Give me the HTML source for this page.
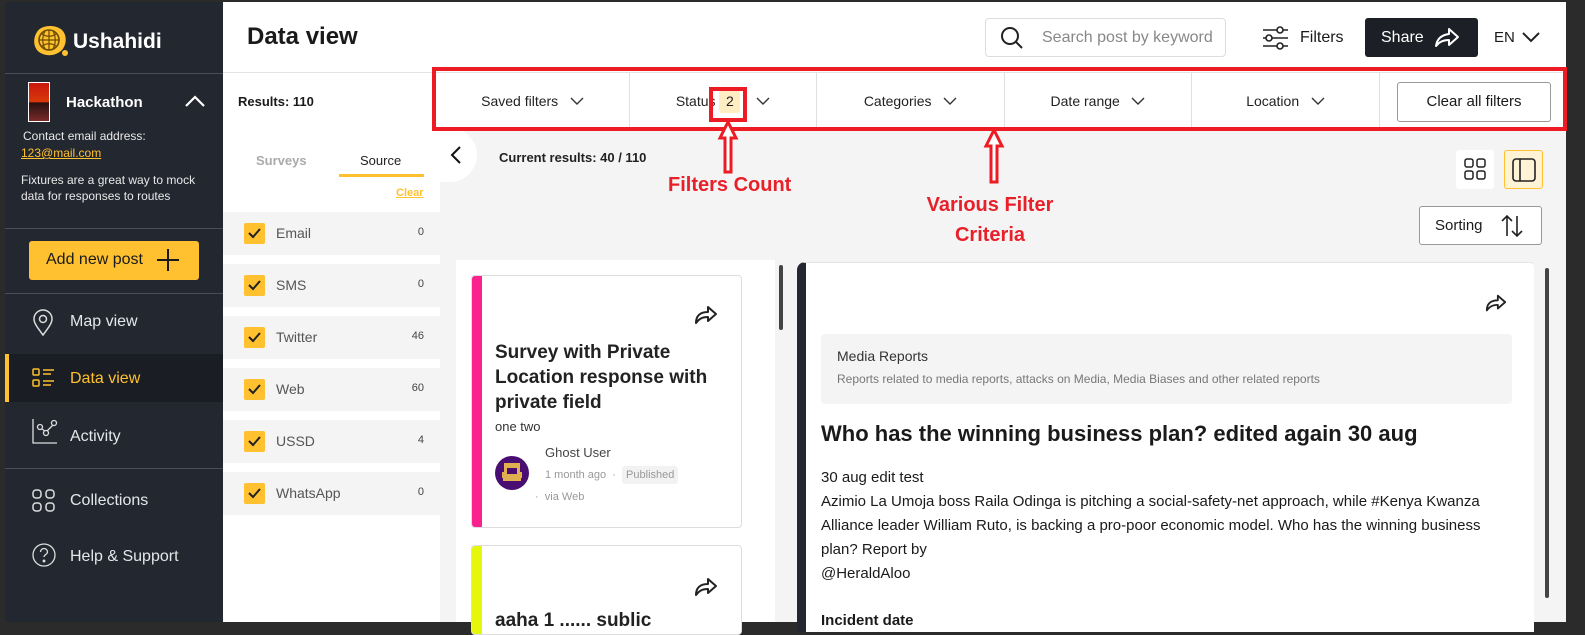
<!DOCTYPE html>
<html><head><meta charset="utf-8">
<style>
*{box-sizing:border-box;margin:0;padding:0}
body{width:1585px;height:622px;overflow:hidden;background:#2b2b2b;font-family:"Liberation Sans",sans-serif;position:relative;color:#1a1a1a}
.a{position:absolute}
.frame{left:5px;top:2px;width:1561px;height:620px;background:#f4f4f4;border-top-right-radius:10px;overflow:hidden}
.side{left:5px;top:2px;width:218px;height:620px;background:#23272f;color:#e8e8e8}
.hr{height:1px;background:#4a4f57;left:0;width:218px}
.nav{left:0;width:218px;height:48px;font-size:16px;color:#e4e6ea}
.nav span{position:absolute;left:65px;top:14px}
.nav svg{position:absolute;left:27px;top:10px}
.row{left:223px;width:217px;height:43px;background:#f4f4f4;font-size:14px;color:#555}
.cb{position:absolute;left:21px;top:11px;width:21px;height:21px;background:#ffc12f;border-radius:2px}
.row .l{position:absolute;left:53px;top:13px}
.row .n{position:absolute;right:16px;top:14px;font-size:11px;color:#444}
.fs{top:73px;height:56px;font-size:14px;color:#222;border-left:1px solid #e0e0e0;text-align:center;line-height:56px;background:#fff}
.red{color:#e8202a;font-weight:bold;font-size:20px;font-family:"Liberation Sans",sans-serif}
</style></head><body>
<div class="a frame"></div>
<!-- header -->
<div class="a" style="left:223px;top:2px;width:1343px;height:71px;background:#fff;border-bottom:1px solid #e3e3e3"></div>
<div class="a" style="left:247px;top:23px;font-size:24px;font-weight:bold;color:#1a1a1a">Data view</div>
<div class="a" style="left:985px;top:18px;width:241px;height:39px;border:1px solid #ddd;border-radius:4px;background:#fff"></div>
<svg class="a" style="left:1000px;top:26px" width="24" height="24" viewBox="0 0 24 24" fill="none" stroke="#222" stroke-width="2"><circle cx="10" cy="10" r="8"/><path d="M16 16l6 6"/></svg>
<div class="a" style="left:1042px;top:29px;font-size:16px;color:#888">Search post by keyword</div>
<svg class="a" style="left:1262px;top:26px" width="26" height="24" viewBox="0 0 26 24" fill="none" stroke="#222" stroke-width="1.6"><path d="M1 4h25M1 12h25M1 20h25"/><circle cx="18" cy="4" r="3" fill="#fff"/><circle cx="7" cy="12" r="3" fill="#fff"/><circle cx="18" cy="20" r="3" fill="#fff"/></svg>
<div class="a" style="left:1300px;top:29px;font-size:16px">Filters</div>
<div class="a" style="left:1365px;top:18px;width:113px;height:39px;background:#1c1f25;border-radius:3px"></div>
<div class="a" style="left:1381px;top:29px;font-size:16px;color:#fff">Share</div>
<svg class="a" style="left:1434px;top:27px" width="26" height="22" viewBox="0 0 26 22" fill="none" stroke="#fff" stroke-width="2" stroke-linejoin="round"><path d="M15 2l9 8-9 8v-5c-6 0-10 2-13 6 1-7 5-11 13-12z"/></svg>
<div class="a" style="left:1494px;top:29px;font-size:15px">EN</div>
<svg class="a" style="left:1522px;top:31px" width="18" height="12" viewBox="0 0 18 12" fill="none" stroke="#222" stroke-width="2"><path d="M1 2l8 8 8-8"/></svg>

<!-- sidebar -->
<div class="a side">
  <svg class="a" style="left:26px;top:22px" width="42" height="36" viewBox="0 0 42 36"><path d="M6 8C10 1 24 0 31 6c5 5 5 14 0 20-6 6-16 7-23 2C2 23 2 14 6 8z" fill="#ffc12f"/><circle cx="34" cy="29" r="3" fill="#ffc12f"/><circle cx="18" cy="16" r="10" fill="none" stroke="#6b4c00" stroke-width="1.6"/><path d="M8 16h20M18 6v20M11 10c4 3 10 3 14 0M11 22c4-3 10-3 14 0M14 7c-3 6-3 12 0 18M22 7c3 6 3 12 0 18" stroke="#6b4c00" stroke-width="1.2" fill="none"/></svg>
  <div class="a" style="left:68px;top:28px;font-size:21px;font-weight:bold;color:#fff">Ushahidi</div>
  <div class="a hr" style="top:71px"></div>
  <div class="a" style="left:23px;top:80px;width:22px;height:40px;background:linear-gradient(#c8180e,#d93a0a 50%,#2a1010 52%,#7a2a2a);border:1px solid #fff"></div>
  <div class="a" style="left:61px;top:92px;font-size:15px;font-weight:bold;color:#fff">Hackathon</div>
  <svg class="a" style="left:180px;top:93px" width="20" height="12" viewBox="0 0 20 12" fill="none" stroke="#fff" stroke-width="2.2"><path d="M1 11l9-9 9 9"/></svg>
  <div class="a" style="left:18px;top:127px;font-size:12px">Contact email address:</div>
  <div class="a" style="left:16px;top:144px;font-size:12px;color:#ffc12f;text-decoration:underline">123@mail.com</div>
  <div class="a" style="left:16px;top:170px;font-size:12px;line-height:16px">Fixtures are a great way to mock<br>data for responses to routes</div>
  <div class="a hr" style="top:226px"></div>
  <div class="a" style="left:24px;top:239px;width:170px;height:39px;background:#ffc12f;border-radius:3px;color:#1a1a1a;font-size:16px"><span style="position:absolute;left:17px;top:10px">Add new post</span><svg style="position:absolute;left:128px;top:8px" width="22" height="22" viewBox="0 0 22 22" stroke="#1a1a1a" stroke-width="2"><path d="M11 0v22M0 11h22"/></svg></div>
  <div class="a hr" style="top:291px"></div>
  <div class="a nav" style="top:297px"><svg width="22" height="28" viewBox="0 0 22 28" fill="none" stroke="#ddd" stroke-width="1.5"><path d="M11 26C5 18 2 14 2 10a9 9 0 0118 0c0 4-3 8-9 16z"/><circle cx="11" cy="10" r="3.5"/></svg><span>Map view</span></div>
  <div class="a nav" style="top:352px;background:#1a1d23;height:48px"><div class="a" style="left:0;top:0;width:4px;height:48px;background:#ffc12f"></div><svg width="24" height="24" viewBox="0 0 24 24" fill="none" stroke="#ffc12f" stroke-width="1.5" style="top:13px"><rect x="1" y="2" width="6" height="6" rx="1"/><rect x="1" y="13" width="6" height="6" rx="1"/><path d="M11 3h11M11 7h8M11 14h11M11 18h8"/></svg><span style="color:#ffc12f;top:16px">Data view</span></div>
  <div class="a nav" style="top:408px"><svg width="26" height="26" viewBox="0 0 26 26" fill="none" stroke="#ddd" stroke-width="1.3" style="top:8px"><path d="M1 1v24h24"/><circle cx="8" cy="9" r="2.5"/><circle cx="14" cy="15" r="2.5"/><circle cx="22" cy="5" r="2.5"/><path d="M10 11l3 2M15 13l6-6"/></svg><span style="top:18px">Activity</span></div>
  <div class="a hr" style="top:466px"></div>
  <div class="a nav" style="top:472px"><svg width="24" height="24" viewBox="0 0 24 24" fill="none" stroke="#ddd" stroke-width="1.5" style="top:15px"><rect x="1" y="1" width="8" height="8" rx="3"/><rect x="14" y="1" width="8" height="8" rx="3"/><rect x="1" y="14" width="8" height="8" rx="3"/><rect x="14" y="14" width="8" height="8" rx="3"/></svg><span style="top:18px">Collections</span></div>
  <div class="a nav" style="top:528px"><svg width="24" height="24" viewBox="0 0 24 24" fill="none" stroke="#ddd" stroke-width="1.3" style="top:13px"><circle cx="12" cy="12" r="11"/><path d="M8.5 9a3.5 3.5 0 117 0c0 2.5-3.5 2.5-3.5 5"/><circle cx="12" cy="18" r=".8" fill="#ddd"/></svg><span style="top:18px">Help &amp; Support</span></div>
</div>

<!-- left filter panel -->
<div class="a" style="left:223px;top:73px;width:217px;height:549px;background:#fff"></div>
<div class="a" style="left:238px;top:94px;font-size:13px;font-weight:bold">Results: 110</div>
<div class="a" style="left:256px;top:153px;font-size:13px;color:#aaa;font-weight:bold">Surveys</div>
<div class="a" style="left:360px;top:153px;font-size:13px;color:#222">Source</div>
<div class="a" style="left:339px;top:174px;width:85px;height:3px;background:#ffc12f"></div>
<div class="a" style="left:396px;top:187px;font-size:11px;color:#ffc12f;text-decoration:underline;font-weight:bold">Clear</div>
<div class="a row" style="top:212px"><div class="cb"><svg width="21" height="21" viewBox="0 0 21 21" fill="none" stroke="#222" stroke-width="2"><path d="M5 10l4 4 7-8"/></svg></div><span class="l">Email</span><span class="n">0</span></div>
<div class="a row" style="top:264px"><div class="cb"><svg width="21" height="21" viewBox="0 0 21 21" fill="none" stroke="#222" stroke-width="2"><path d="M5 10l4 4 7-8"/></svg></div><span class="l">SMS</span><span class="n">0</span></div>
<div class="a row" style="top:316px"><div class="cb"><svg width="21" height="21" viewBox="0 0 21 21" fill="none" stroke="#222" stroke-width="2"><path d="M5 10l4 4 7-8"/></svg></div><span class="l">Twitter</span><span class="n">46</span></div>
<div class="a row" style="top:368px"><div class="cb"><svg width="21" height="21" viewBox="0 0 21 21" fill="none" stroke="#222" stroke-width="2"><path d="M5 10l4 4 7-8"/></svg></div><span class="l">Web</span><span class="n">60</span></div>
<div class="a row" style="top:420px"><div class="cb"><svg width="21" height="21" viewBox="0 0 21 21" fill="none" stroke="#222" stroke-width="2"><path d="M5 10l4 4 7-8"/></svg></div><span class="l">USSD</span><span class="n">4</span></div>
<div class="a row" style="top:472px"><div class="cb"><svg width="21" height="21" viewBox="0 0 21 21" fill="none" stroke="#222" stroke-width="2"><path d="M5 10l4 4 7-8"/></svg></div><span class="l">WhatsApp</span><span class="n">0</span></div>

<!-- filter bar -->
<div class="a fs" style="left:436px;width:193px;border-left:none">Saved filters &nbsp;&nbsp;<svg width="14" height="9" viewBox="0 0 14 9" fill="none" stroke="#333" stroke-width="1.4"><path d="M1 1l6 6 6-6"/></svg></div>
<div class="a fs" style="left:629px;width:187px">Status&nbsp;<span style="display:inline-block;background:#ffeec4;width:21px;height:24px;line-height:24px;border-radius:3px;margin:0 8px 0 0">2</span>&nbsp;&nbsp;<svg width="14" height="9" viewBox="0 0 14 9" fill="none" stroke="#333" stroke-width="1.4"><path d="M1 1l6 6 6-6"/></svg></div>
<div class="a fs" style="left:816px;width:188px">Categories &nbsp;&nbsp;<svg width="14" height="9" viewBox="0 0 14 9" fill="none" stroke="#333" stroke-width="1.4"><path d="M1 1l6 6 6-6"/></svg></div>
<div class="a fs" style="left:1004px;width:187px">Date range &nbsp;&nbsp;<svg width="14" height="9" viewBox="0 0 14 9" fill="none" stroke="#333" stroke-width="1.4"><path d="M1 1l6 6 6-6"/></svg></div>
<div class="a fs" style="left:1191px;width:188px">Location &nbsp;&nbsp;<svg width="14" height="9" viewBox="0 0 14 9" fill="none" stroke="#333" stroke-width="1.4"><path d="M1 1l6 6 6-6"/></svg></div>
<div class="a fs" style="left:1379px;width:187px"></div>
<div class="a" style="left:1397px;top:82px;width:154px;height:40px;border:1px solid #999;border-radius:3px;background:#fff;font-size:15px;text-align:center;line-height:38px">Clear all filters</div>

<!-- main -->
<div class="a" style="left:440px;top:128px;width:37px;height:54px;background:#fff;border-radius:0 27px 27px 0"></div>
<svg class="a" style="left:450px;top:146px" width="12" height="18" viewBox="0 0 12 18" fill="none" stroke="#111" stroke-width="2"><path d="M10 1L2 9l8 8"/></svg>
<div class="a" style="left:499px;top:150px;font-size:13px;font-weight:bold;color:#222">Current results: 40 / 110</div>
<div class="a" style="left:1456px;top:150px;width:38px;height:39px;background:#fff;border-radius:3px"></div>
<svg class="a" style="left:1464px;top:158px" width="22" height="22" viewBox="0 0 22 22" fill="none" stroke="#222" stroke-width="1.5"><rect x="1" y="1" width="8" height="8" rx="2"/><rect x="13" y="1" width="8" height="8" rx="2"/><rect x="1" y="13" width="8" height="8" rx="2"/><rect x="13" y="13" width="8" height="8" rx="2"/></svg>
<div class="a" style="left:1504px;top:150px;width:39px;height:39px;background:#fff3d6;border:1px solid #ffc12f;border-radius:3px"></div>
<svg class="a" style="left:1512px;top:158px" width="24" height="24" viewBox="0 0 24 24" fill="none" stroke="#222" stroke-width="1.6"><rect x="1" y="1" width="22" height="22" rx="3"/><path d="M8 1v22"/></svg>
<div class="a" style="left:1419px;top:206px;width:123px;height:39px;background:#fff;border:1px solid #999;border-radius:3px"><span style="position:absolute;left:15px;top:10px;font-size:15px">Sorting</span><svg style="position:absolute;left:80px;top:7px" width="24" height="24" viewBox="0 0 24 24" fill="none" stroke="#222" stroke-width="1.6"><path d="M7 22V2M2 7l5-5 5 5M17 2v20M12 17l5 5 5-5"/></svg></div>

<!-- list -->
<div class="a" style="left:456px;top:260px;width:319px;height:362px;background:#fff"></div>
<div class="a" style="left:779px;top:265px;width:4px;height:65px;background:#444;border-radius:2px"></div>
<div class="a" style="left:471px;top:275px;width:271px;height:253px;background:#fff;border:1px solid #ddd;border-radius:4px;overflow:hidden"><div class="a" style="left:0;top:0;width:10px;height:253px;background:#fb2290"></div></div>
<svg class="a" style="left:694px;top:306px" width="24" height="19" viewBox="0 0 24 19" fill="none" stroke="#222" stroke-width="2" stroke-linejoin="round"><path d="M14 1l8 7-8 7v-4c-6 0-9 2-12 6 0-7 4-11 12-11z"/></svg>
<div class="a" style="left:495px;top:340px;font-size:19px;font-weight:bold;line-height:25px;color:#222">Survey with Private<br>Location response with<br>private field</div>
<div class="a" style="left:495px;top:419px;font-size:13px;color:#333">one two</div>
<svg class="a" style="left:495px;top:456px" width="34" height="34" viewBox="0 0 34 34"><circle cx="17" cy="17" r="17" fill="#4a0e73"/><rect x="9" y="7" width="16" height="9" fill="#e0b050"/><rect x="7" y="16" width="20" height="6" fill="#e0b050"/><rect x="12" y="12" width="10" height="6" fill="#4a0e73"/><rect x="8" y="22" width="18" height="3" fill="#e0b050"/></svg>
<div class="a" style="left:545px;top:445px;font-size:13px;color:#444">Ghost User</div>
<div class="a" style="left:545px;top:469px;font-size:11px;color:#999">1 month ago &nbsp;·&nbsp; <span style="background:#f2f2f2;padding:3px 4px;border-radius:3px;color:#999">Published</span></div>
<div class="a" style="left:535px;top:491px;font-size:11px;color:#999">· &nbsp;via Web</div>
<div class="a" style="left:471px;top:545px;width:271px;height:90px;background:#fff;border:1px solid #ddd;border-radius:4px;overflow:hidden"><div class="a" style="left:0;top:0;width:10px;height:90px;background:#e5f70b"></div></div>
<svg class="a" style="left:694px;top:578px" width="24" height="19" viewBox="0 0 24 19" fill="none" stroke="#222" stroke-width="2" stroke-linejoin="round"><path d="M14 1l8 7-8 7v-4c-6 0-9 2-12 6 0-7 4-11 12-11z"/></svg>
<div class="a" style="left:495px;top:610px;font-size:19px;font-weight:bold;color:#222">aaha 1 ...... sublic</div>

<!-- detail -->
<div class="a" style="left:797px;top:262px;width:737px;height:370px;background:#fff;border-radius:8px 4px 0 0;border-left:9px solid #23272f;border-top:1px solid #e3e3e3"></div>
<div class="a" style="left:1545px;top:268px;width:4px;height:330px;background:#444;border-radius:2px"></div>
<svg class="a" style="left:1485px;top:294px" width="22" height="19" viewBox="0 0 24 19" fill="none" stroke="#222" stroke-width="2" stroke-linejoin="round"><path d="M14 1l8 7-8 7v-4c-6 0-9 2-12 6 0-7 4-11 12-11z"/></svg>
<div class="a" style="left:821px;top:334px;width:691px;height:70px;background:#f4f4f4;border-radius:4px"></div>
<div class="a" style="left:837px;top:348px;font-size:14px;color:#333">Media Reports</div>
<div class="a" style="left:837px;top:372px;font-size:12px;color:#777">Reports related to media reports, attacks on Media, Media Biases and other related reports</div>
<div class="a" style="left:821px;top:421px;font-size:22px;font-weight:bold;color:#1a1a1a">Who has the winning business plan? edited again 30 aug</div>
<div class="a" style="left:821px;top:466px;font-size:15px;line-height:24px;color:#1a1a1a;width:690px">30 aug edit test<br>Azimio La Umoja boss Raila Odinga is pitching a social-safety-net approach, while #Kenya Kwanza Alliance leader William Ruto, is backing a pro-poor economic model. Who has the winning business plan? Report by<br>@HeraldAloo</div>
<div class="a" style="left:821px;top:612px;font-size:15px;font-weight:bold">Incident date</div>

<!-- annotations -->
<div class="a" style="left:432px;top:67px;width:1135px;height:64px;border:4px solid #ed1c24"></div>
<div class="a" style="left:709px;top:87px;width:38px;height:35px;border:4px solid #ed1c24"></div>
<svg class="a" style="left:718px;top:120px;overflow:visible" width="20" height="54" viewBox="0 0 20 54" fill="#fff" stroke="#ed1c24" stroke-width="3"><path d="M10 2L2 18h5v34h6V18h5z"/></svg>
<div class="a red" style="left:668px;top:174px">Filters Count</div>
<svg class="a" style="left:984px;top:128px;overflow:visible" width="20" height="56" viewBox="0 0 20 56" fill="#fff" stroke="#ed1c24" stroke-width="3"><path d="M10 2L2 18h5v36h6V18h5z"/></svg>
<div class="a red" style="left:910px;top:190px;width:160px;text-align:center;line-height:30px">Various Filter<br>Criteria</div>
</body></html>
